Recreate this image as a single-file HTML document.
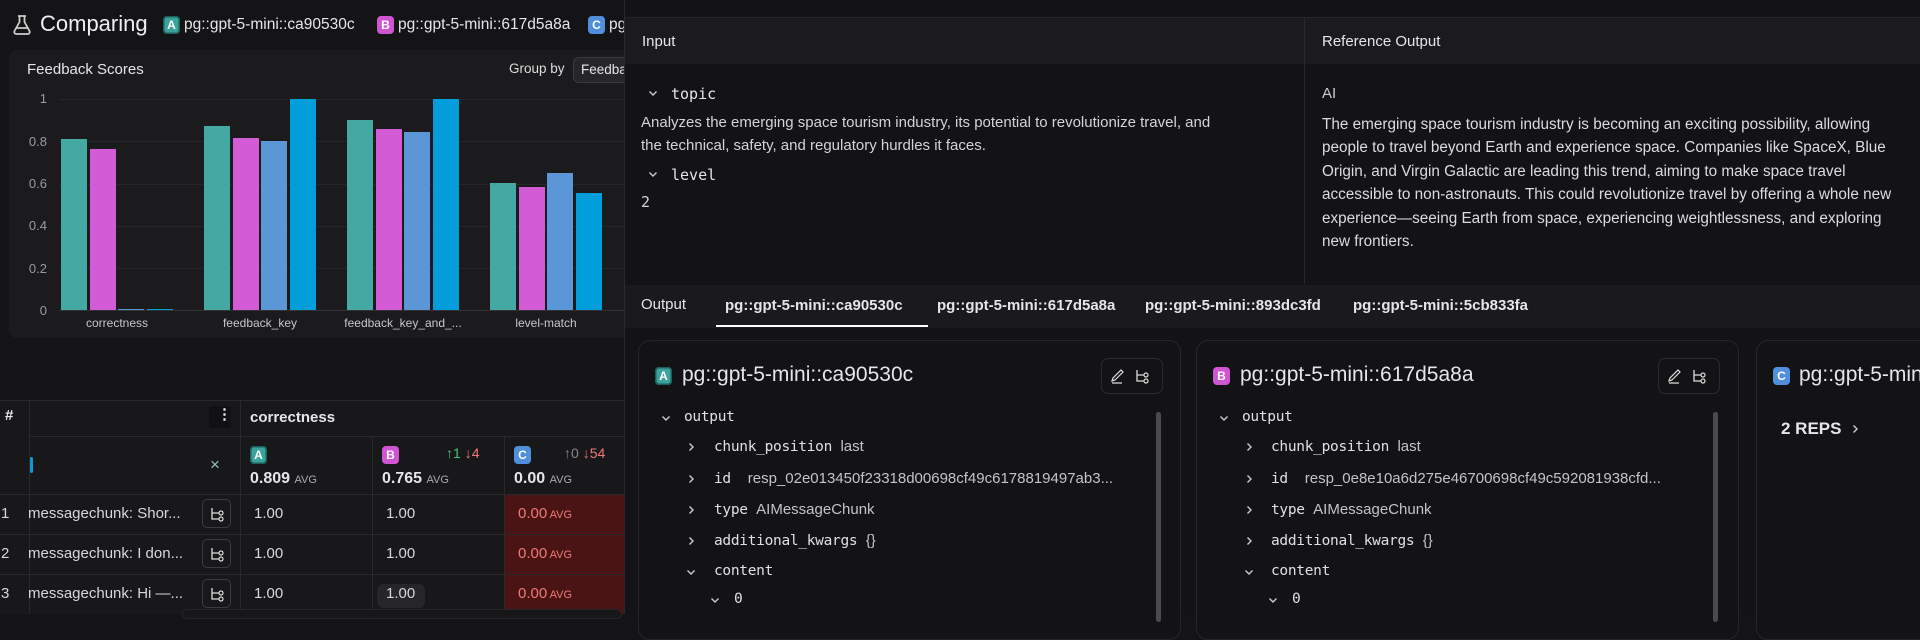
<!DOCTYPE html>
<html><head><meta charset="utf-8"><style>
*{box-sizing:border-box;margin:0;padding:0}
body{width:1920px;height:614px;overflow:hidden;background:#141417;font-family:"Liberation Sans",sans-serif;color:#e6e6e8;position:relative}
.abs{position:absolute}
.badge{position:absolute;width:17px;height:18px;border-radius:4px;font-size:12px;font-weight:bold;color:#fff;text-align:center;line-height:18px}
.bA{background:#3aa39c;box-shadow:0 0 0 1.5px #1c5f5a inset}
.bB{background:#cf55d3}
.bC{background:#4f8fdc}
.mono{font-family:"DejaVu Sans Mono","Liberation Mono",monospace}
.t{position:absolute;white-space:nowrap}
.bar{position:absolute;width:26px}
.ax{position:absolute;font-size:13px;color:#9a9aa2;text-align:right;width:20px}
.grid{position:absolute;left:59px;width:565px;height:1px;background:#26262a}
.xl{position:absolute;font-size:12px;color:#c8c8cc;text-align:center;width:140px}
.vl{position:absolute;width:1px;background:#2a2a2e}
.hl{position:absolute;height:1px;background:#2a2a2e}
.cell{font-size:15px;color:#d8d8dc}
.red{position:absolute;background:#4a1414}
.rb{position:absolute;width:29px;height:29px;border:1px solid #3a3a3f;border-radius:5px}
.rb svg{position:absolute;left:6px;top:6px}
.card{position:absolute;border:1px solid #26262a;border-radius:12px;background:#131316}
.cd,.cr{position:absolute;width:12px;height:12px}
.key{font-size:14.5px;color:#e0e0e4;letter-spacing:-0.3px}
.val{font-size:15px;color:#c4c4c8;font-family:"Liberation Sans",sans-serif;letter-spacing:0}
</style></head><body>
<svg width="0" height="0" style="position:absolute"><defs>
<symbol id="down" viewBox="0 0 12 12"><path d="M2.5 4.5l3.5 3.5 3.5-3.5" fill="none" stroke="#ccc" stroke-width="1.4"/></symbol>
<symbol id="right" viewBox="0 0 12 12"><path d="M4.5 2.5l3.5 3.5-3.5 3.5" fill="none" stroke="#ccc" stroke-width="1.4"/></symbol>
<symbol id="tree" viewBox="0 0 16 16"><path d="M3 2v11h7M3 7h7" fill="none" stroke="#ddd" stroke-width="1.3"/><circle cx="12" cy="7" r="2" fill="none" stroke="#ddd" stroke-width="1.2"/><circle cx="12" cy="13" r="2" fill="none" stroke="#ddd" stroke-width="1.2"/></symbol>
</defs></svg>

<!-- LEFT PANEL -->
<svg class="abs" style="left:12px;top:14px" width="20" height="22" viewBox="0 0 20 22"><path d="M6 2h8M7.5 2v6L2.5 17a2 2 0 0 0 1.8 3h11.4a2 2 0 0 0 1.8-3L12.5 8V2M4.5 14h11" fill="none" stroke="#ccc" stroke-width="1.8" stroke-linejoin="round"/></svg>
<div class="t" style="left:40px;top:11px;font-size:22px;color:#f0f0f2">Comparing</div>
<div class="badge bA" style="left:163px;top:16px">A</div>
<div class="t" style="left:184px;top:16px;font-size:15.5px">pg::gpt-5-mini::ca90530c</div>
<div class="badge bB" style="left:377px;top:16px">B</div>
<div class="t" style="left:398px;top:16px;font-size:15.5px">pg::gpt-5-mini::617d5a8a</div>
<div class="badge bC" style="left:588px;top:16px">C</div>
<div class="t" style="left:609px;top:16px;font-size:15.5px">pg</div>

<div class="abs" style="left:9px;top:50px;width:640px;height:288px;background:#1b1b1e;border-radius:8px"></div>
<div class="t" style="left:27px;top:61px;font-size:15px">Feedback Scores</div>
<div class="t" style="left:509px;top:61px;font-size:13.5px;color:#ddd">Group by</div>
<div class="abs" style="left:573px;top:57px;width:60px;height:26px;border:1px solid #3a3a3f;border-radius:6px;background:#26262a"></div>
<div class="t" style="left:581px;top:62px;font-size:13.5px">Feedba</div>

<div class="grid" style="top:99px"></div><div class="grid" style="top:141px"></div><div class="grid" style="top:184px"></div><div class="grid" style="top:226px"></div><div class="grid" style="top:268px"></div><div class="grid" style="top:310px;background:#333"></div>
<div class="ax" style="left:27px;top:91px">1</div><div class="ax" style="left:27px;top:134px">0.8</div><div class="ax" style="left:27px;top:176px">0.6</div><div class="ax" style="left:27px;top:218px">0.4</div><div class="ax" style="left:27px;top:261px">0.2</div><div class="ax" style="left:27px;top:303px">0</div>

<div class="bar" style="left:61px;top:139px;height:171px;background:#43a9a2"></div>
<div class="bar" style="left:90px;top:149px;height:161px;background:#d35bd5"></div>
<div class="bar" style="left:118px;top:309px;height:1px;background:#5b96d6"></div>
<div class="bar" style="left:147px;top:309px;height:1px;background:#009edb"></div>

<div class="bar" style="left:204px;top:126px;height:184px;background:#43a9a2"></div>
<div class="bar" style="left:233px;top:138px;height:172px;background:#d35bd5"></div>
<div class="bar" style="left:261px;top:141px;height:169px;background:#5b96d6"></div>
<div class="bar" style="left:290px;top:99px;height:211px;background:#009edb"></div>

<div class="bar" style="left:347px;top:120px;height:190px;background:#43a9a2"></div>
<div class="bar" style="left:376px;top:129px;height:181px;background:#d35bd5"></div>
<div class="bar" style="left:404px;top:132px;height:178px;background:#5b96d6"></div>
<div class="bar" style="left:433px;top:99px;height:211px;background:#009edb"></div>

<div class="bar" style="left:490px;top:183px;height:127px;background:#43a9a2"></div>
<div class="bar" style="left:519px;top:187px;height:123px;background:#d35bd5"></div>
<div class="bar" style="left:547px;top:173px;height:137px;background:#5b96d6"></div>
<div class="bar" style="left:576px;top:193px;height:117px;background:#009edb"></div>

<div class="xl" style="left:47px;top:316px">correctness</div>
<div class="xl" style="left:190px;top:316px">feedback_key</div>
<div class="xl" style="left:333px;top:316px">feedback_key_and_...</div>
<div class="xl" style="left:476px;top:316px">level-match</div>

<!-- table -->
<div class="abs" style="left:0;top:400px;width:624px;height:214px;background:#18181b"></div>
<div class="hl" style="left:0;top:400px;width:624px"></div>
<div class="hl" style="left:29px;top:436px;width:595px"></div>
<div class="hl" style="left:0;top:494px;width:624px"></div>
<div class="hl" style="left:0;top:534px;width:624px"></div>
<div class="hl" style="left:0;top:574px;width:624px"></div>
<div class="vl" style="left:29px;top:400px;height:214px"></div>
<div class="vl" style="left:240px;top:400px;height:214px"></div>
<div class="vl" style="left:372px;top:436px;height:178px"></div>
<div class="vl" style="left:504px;top:436px;height:178px"></div>
<div class="red" style="left:505px;top:495px;width:119px;height:39px"></div>
<div class="red" style="left:505px;top:535px;width:119px;height:39px"></div>
<div class="red" style="left:505px;top:575px;width:119px;height:39px"></div>

<div class="t" style="left:5px;top:407px;font-size:15px;font-weight:bold">#</div>
<div class="abs" style="left:209px;top:406px;width:22px;height:22px;background:#111113;border-radius:4px"></div>
<div class="t" style="left:217px;top:405px;font-size:15px;font-weight:bold">⋮</div>
<div class="t" style="left:250px;top:409px;font-size:15px;font-weight:bold">correctness</div>
<div class="abs" style="left:30px;top:457px;width:3px;height:16px;background:#0a9ad6;border-radius:2px"></div>
<div class="t" style="left:210px;top:455px;font-size:17px;color:#8fc4c0">×</div>

<div class="badge bA" style="left:250px;top:446px">A</div>
<div class="t" style="left:250px;top:470px;font-size:16px;font-weight:bold">0.809 <span style="font-size:11px;font-weight:normal;color:#aaa">AVG</span></div>
<div class="badge bB" style="left:382px;top:446px">B</div>
<div class="t" style="left:446px;top:445px;font-size:14px;color:#4ac47a">↑1 <span style="color:#f07878">↓4</span></div>
<div class="badge bC" style="left:514px;top:446px">C</div>
<div class="t" style="left:382px;top:470px;font-size:16px;font-weight:bold">0.765 <span style="font-size:11px;font-weight:normal;color:#aaa">AVG</span></div>
<div class="t" style="left:564px;top:445px;font-size:14px;color:#888">↑0 <span style="color:#f07878">↓54</span></div>
<div class="t" style="left:514px;top:470px;font-size:16px;font-weight:bold">0.00 <span style="font-size:11px;font-weight:normal;color:#aaa">AVG</span></div>

<div class="t cell" style="left:1px;top:505px">1</div>
<div class="t cell" style="left:28px;top:505px">messagechunk: Shor...</div>
<div class="rb" style="left:202px;top:499px"><svg width="16" height="16"><use href="#tree"/></svg></div>
<div class="t cell" style="left:254px;top:505px">1.00</div><div class="t cell" style="left:386px;top:505px">1.00</div>
<div class="t cell" style="left:518px;top:505px;color:#f07878">0.00<span style="font-size:11px"> AVG</span></div>

<div class="t cell" style="left:1px;top:545px">2</div>
<div class="t cell" style="left:28px;top:545px">messagechunk: I don...</div>
<div class="rb" style="left:202px;top:539px"><svg width="16" height="16"><use href="#tree"/></svg></div>
<div class="t cell" style="left:254px;top:545px">1.00</div><div class="t cell" style="left:386px;top:545px">1.00</div>
<div class="t cell" style="left:518px;top:545px;color:#f07878">0.00<span style="font-size:11px"> AVG</span></div>

<div class="t cell" style="left:1px;top:585px">3</div>
<div class="t cell" style="left:28px;top:585px">messagechunk: Hi —...</div>
<div class="rb" style="left:202px;top:579px"><svg width="16" height="16"><use href="#tree"/></svg></div>
<div class="t cell" style="left:254px;top:585px">1.00</div>
<div class="abs" style="left:377px;top:584px;width:48px;height:24px;background:#26262a;border-radius:6px"></div>
<div class="t cell" style="left:386px;top:585px">1.00</div>
<div class="t cell" style="left:518px;top:585px;color:#f07878">0.00<span style="font-size:11px"> AVG</span></div>
<div class="abs" style="left:182px;top:609px;width:440px;height:10px;border:1px solid #26262a;border-radius:6px;background:#17171a"></div>

<!-- RIGHT PANEL -->
<div class="abs" style="left:624px;top:0;width:1296px;height:614px;background:#131316;border-left:1px solid #2a2a2e"></div>
<div class="abs" style="left:625px;top:17px;width:1295px;height:47px;background:#1b1b1e;border-top:1px solid #26262a"></div>
<div class="vl" style="left:1304px;top:17px;height:267px"></div>
<div class="t" style="left:642px;top:33px;font-size:15px">Input</div>
<div class="t" style="left:1322px;top:33px;font-size:15px">Reference Output</div>

<svg class="cd" style="left:647px;top:87px"><use href="#down"/></svg>
<div class="t mono" style="left:671px;top:85px;font-size:15px">topic</div>
<div class="abs" style="left:641px;top:111px;width:660px;font-size:15px;line-height:23px;color:#d4d4d8;white-space:nowrap">Analyzes the emerging space tourism industry, its potential to revolutionize travel, and<br>the technical, safety, and regulatory hurdles it faces.</div>
<svg class="cd" style="left:647px;top:168px"><use href="#down"/></svg>
<div class="t mono" style="left:671px;top:166px;font-size:15px">level</div>
<div class="t mono" style="left:641px;top:193px;font-size:15px;color:#d4d4d8">2</div>

<div class="t" style="left:1322px;top:85px;font-size:15px;color:#ccc">AI</div>
<div class="abs" style="left:1322px;top:113px;width:598px;overflow:hidden;font-size:15.3px;line-height:23.4px;color:#dcdce0;white-space:nowrap">The emerging space tourism industry is becoming an exciting possibility, allowing<br>people to travel beyond Earth and experience space. Companies like SpaceX, Blue<br>Origin, and Virgin Galactic are leading this trend, aiming to make space travel<br>accessible to non-astronauts. This could revolutionize travel by offering a whole new<br>experience—seeing Earth from space, experiencing weightlessness, and exploring<br>new frontiers.</div>

<div class="abs" style="left:625px;top:285px;width:1295px;height:43px;background:#1a1a1d"></div>
<div class="t" style="left:641px;top:296px;font-size:15px">Output</div>
<div class="t" style="left:725px;top:297px;font-size:15px;font-weight:bold">pg::gpt-5-mini::ca90530c</div>
<div class="abs" style="left:716px;top:325px;width:212px;height:2px;background:#fff"></div>
<div class="t" style="left:937px;top:297px;font-size:15px;font-weight:bold">pg::gpt-5-mini::617d5a8a</div>
<div class="t" style="left:1145px;top:297px;font-size:15px;font-weight:bold">pg::gpt-5-mini::893dc3fd</div>
<div class="t" style="left:1353px;top:297px;font-size:15px;font-weight:bold">pg::gpt-5-mini::5cb833fa</div>

<!-- Card A -->
<div class="card" style="left:638px;top:340px;width:543px;height:300px"></div>
<div class="badge bA" style="left:655px;top:367px">A</div>
<div class="t" style="left:682px;top:363px;font-size:21px">pg::gpt-5-mini::ca90530c</div>
<div class="abs" style="left:1101px;top:358px;width:62px;height:36px;border:1px solid #2c2c30;border-radius:7px"></div>
<svg class="abs" style="left:1110px;top:368px" width="46" height="16" viewBox="0 0 46 16"><path d="M2 13l1-3 8-8 2 2-8 8-3 1zM2 15h10" fill="none" stroke="#ddd" stroke-width="1.2"/><path d="M27 2v11h7M27 7h7" fill="none" stroke="#ddd" stroke-width="1.3"/><circle cx="36" cy="7" r="2" fill="none" stroke="#ddd" stroke-width="1.2"/><circle cx="36" cy="13" r="2" fill="none" stroke="#ddd" stroke-width="1.2"/></svg>
<div class="abs" style="left:1156px;top:412px;width:5px;height:210px;background:#4a4a4e;border-radius:3px"></div>

<svg class="cd" style="left:660px;top:412px"><use href="#down"/></svg><div class="t mono key" style="left:684px;top:409px">output</div>
<svg class="cr" style="left:685px;top:441px"><use href="#right"/></svg><div class="t mono key" style="left:714px;top:438px">chunk_position <span class="val">last</span></div>
<svg class="cr" style="left:685px;top:473px"><use href="#right"/></svg><div class="t mono key" style="left:714px;top:470px">id &nbsp;<span class="val">resp_02e013450f23318d00698cf49c6178819497ab3...</span></div>
<svg class="cr" style="left:685px;top:504px"><use href="#right"/></svg><div class="t mono key" style="left:714px;top:501px">type <span class="val">AIMessageChunk</span></div>
<svg class="cr" style="left:685px;top:535px"><use href="#right"/></svg><div class="t mono key" style="left:714px;top:532px">additional_kwargs <span class="val">{}</span></div>
<svg class="cd" style="left:685px;top:566px"><use href="#down"/></svg><div class="t mono key" style="left:714px;top:563px">content</div>
<svg class="cd" style="left:709px;top:594px"><use href="#down"/></svg><div class="t mono key" style="left:734px;top:591px">0</div>

<!-- Card B -->
<div class="card" style="left:1196px;top:340px;width:543px;height:300px"></div>
<div class="badge bB" style="left:1213px;top:367px">B</div>
<div class="t" style="left:1240px;top:363px;font-size:21px">pg::gpt-5-mini::617d5a8a</div>
<div class="abs" style="left:1658px;top:358px;width:62px;height:36px;border:1px solid #2c2c30;border-radius:7px"></div>
<svg class="abs" style="left:1667px;top:368px" width="46" height="16" viewBox="0 0 46 16"><path d="M2 13l1-3 8-8 2 2-8 8-3 1zM2 15h10" fill="none" stroke="#ddd" stroke-width="1.2"/><path d="M27 2v11h7M27 7h7" fill="none" stroke="#ddd" stroke-width="1.3"/><circle cx="36" cy="7" r="2" fill="none" stroke="#ddd" stroke-width="1.2"/><circle cx="36" cy="13" r="2" fill="none" stroke="#ddd" stroke-width="1.2"/></svg>
<div class="abs" style="left:1713px;top:412px;width:5px;height:210px;background:#4a4a4e;border-radius:3px"></div>

<svg class="cd" style="left:1218px;top:412px"><use href="#down"/></svg><div class="t mono key" style="left:1242px;top:409px">output</div>
<svg class="cr" style="left:1243px;top:441px"><use href="#right"/></svg><div class="t mono key" style="left:1271px;top:438px">chunk_position <span class="val">last</span></div>
<svg class="cr" style="left:1243px;top:473px"><use href="#right"/></svg><div class="t mono key" style="left:1271px;top:470px">id &nbsp;<span class="val">resp_0e8e10a6d275e46700698cf49c592081938cfd...</span></div>
<svg class="cr" style="left:1243px;top:504px"><use href="#right"/></svg><div class="t mono key" style="left:1271px;top:501px">type <span class="val">AIMessageChunk</span></div>
<svg class="cr" style="left:1243px;top:535px"><use href="#right"/></svg><div class="t mono key" style="left:1271px;top:532px">additional_kwargs <span class="val">{}</span></div>
<svg class="cd" style="left:1243px;top:566px"><use href="#down"/></svg><div class="t mono key" style="left:1271px;top:563px">content</div>
<svg class="cd" style="left:1267px;top:594px"><use href="#down"/></svg><div class="t mono key" style="left:1292px;top:591px">0</div>

<!-- Card C -->
<div class="card" style="left:1756px;top:340px;width:300px;height:300px"></div>
<div class="badge bC" style="left:1773px;top:367px">C</div>
<div class="t" style="left:1799px;top:363px;font-size:21px">pg::gpt-5-mini</div>
<div class="t" style="left:1781px;top:419px;font-size:17px;font-weight:bold">2 REPS</div>
<svg class="cr" style="left:1849px;top:423px"><use href="#right"/></svg>
</body></html>
